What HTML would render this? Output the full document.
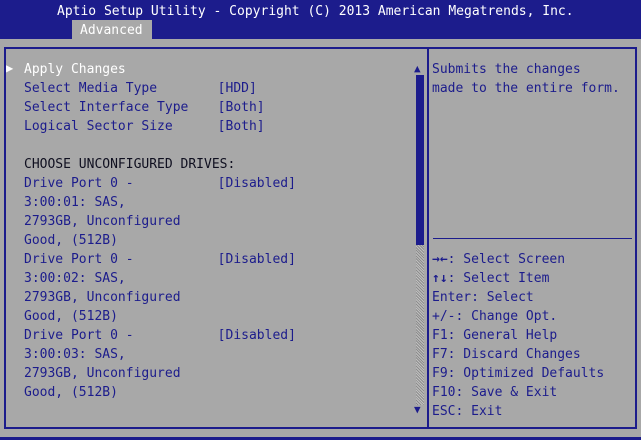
<!DOCTYPE html><html><head><style>
body{margin:0;width:641px;height:440px;background:#a8a8a8;position:relative;overflow:hidden;font-family:"DejaVu Sans Mono","Liberation Mono",monospace;font-size:13px}
.a{position:absolute;white-space:pre;line-height:19px}
.b{color:#1c1c8c}.w{color:#fff}
</style></head><body>
<div style="position:absolute;left:0;top:0;width:641px;height:39px;background:#1c1c8c"></div>
<div class="a w" style="left:57px;top:2px">Aptio Setup Utility - Copyright (C) 2013 American Megatrends, Inc.</div>
<div style="position:absolute;left:72px;top:20px;width:80px;height:19px;background:#a8a8a8"></div>
<div class="a" style="left:80px;top:21px;color:#fff">Advanced</div>
<div style="position:absolute;left:4px;top:47px;width:629px;height:378px;border:2px solid #1c1c8c"></div>
<div style="position:absolute;left:427px;top:47px;width:2px;height:380px;background:#1c1c8c"></div>
<div style="position:absolute;left:0;top:437px;width:641px;height:3px;background:#1c1c8c"></div>
<div style="position:absolute;left:433px;top:238px;width:199px;height:1px;background:#1c1c8c"></div>
<div style="position:absolute;left:416px;top:75px;width:8px;height:330px;background:repeating-linear-gradient(45deg,#c0c0c0 0 1px,#8c8c8c 1px 2px)"></div>
<div style="position:absolute;left:416px;top:75px;width:8px;height:170px;background:#1c1c8c"></div>
<div class="a b" style="left:414px;top:59px;font-size:11px">▲</div>
<div class="a b" style="left:414px;top:400px;font-size:11px">▼</div>
<div class="a w" style="left:6px;top:59px;font-size:12px">▶</div>
<div class="a" style="left:24px;top:60px"><span class="w">Apply Changes</span>
<span class="b">Select Media Type       <span style="margin-left:-2px"> </span>[HDD]
Select Interface Type   <span style="margin-left:-2px"> </span>[Both]
Logical Sector Size     <span style="margin-left:-2px"> </span>[Both]
</span>
<span style="color:#101020">CHOOSE UNCONFIGURED DRIVES:</span>
<span class="b">Drive Port 0 -          <span style="margin-left:-2px"> </span>[Disabled]
3:00:01: SAS,
2793GB, Unconfigured
Good, (512B)
Drive Port 0 -          <span style="margin-left:-2px"> </span>[Disabled]
3:00:02: SAS,
2793GB, Unconfigured
Good, (512B)
Drive Port 0 -          <span style="margin-left:-2px"> </span>[Disabled]
3:00:03: SAS,
2793GB, Unconfigured
Good, (512B)</span></div>
<div class="a b" style="left:432px;top:60px">Submits the changes
made to the entire form.</div>
<div class="a b" style="left:432px;top:250px"><b>→←</b>: Select Screen
<b>↑↓</b>: Select Item
Enter: Select
+/-: Change Opt.
F1: General Help
F7: Discard Changes
F9: Optimized Defaults
F10: Save &amp; Exit
ESC: Exit</div>
</body></html>
